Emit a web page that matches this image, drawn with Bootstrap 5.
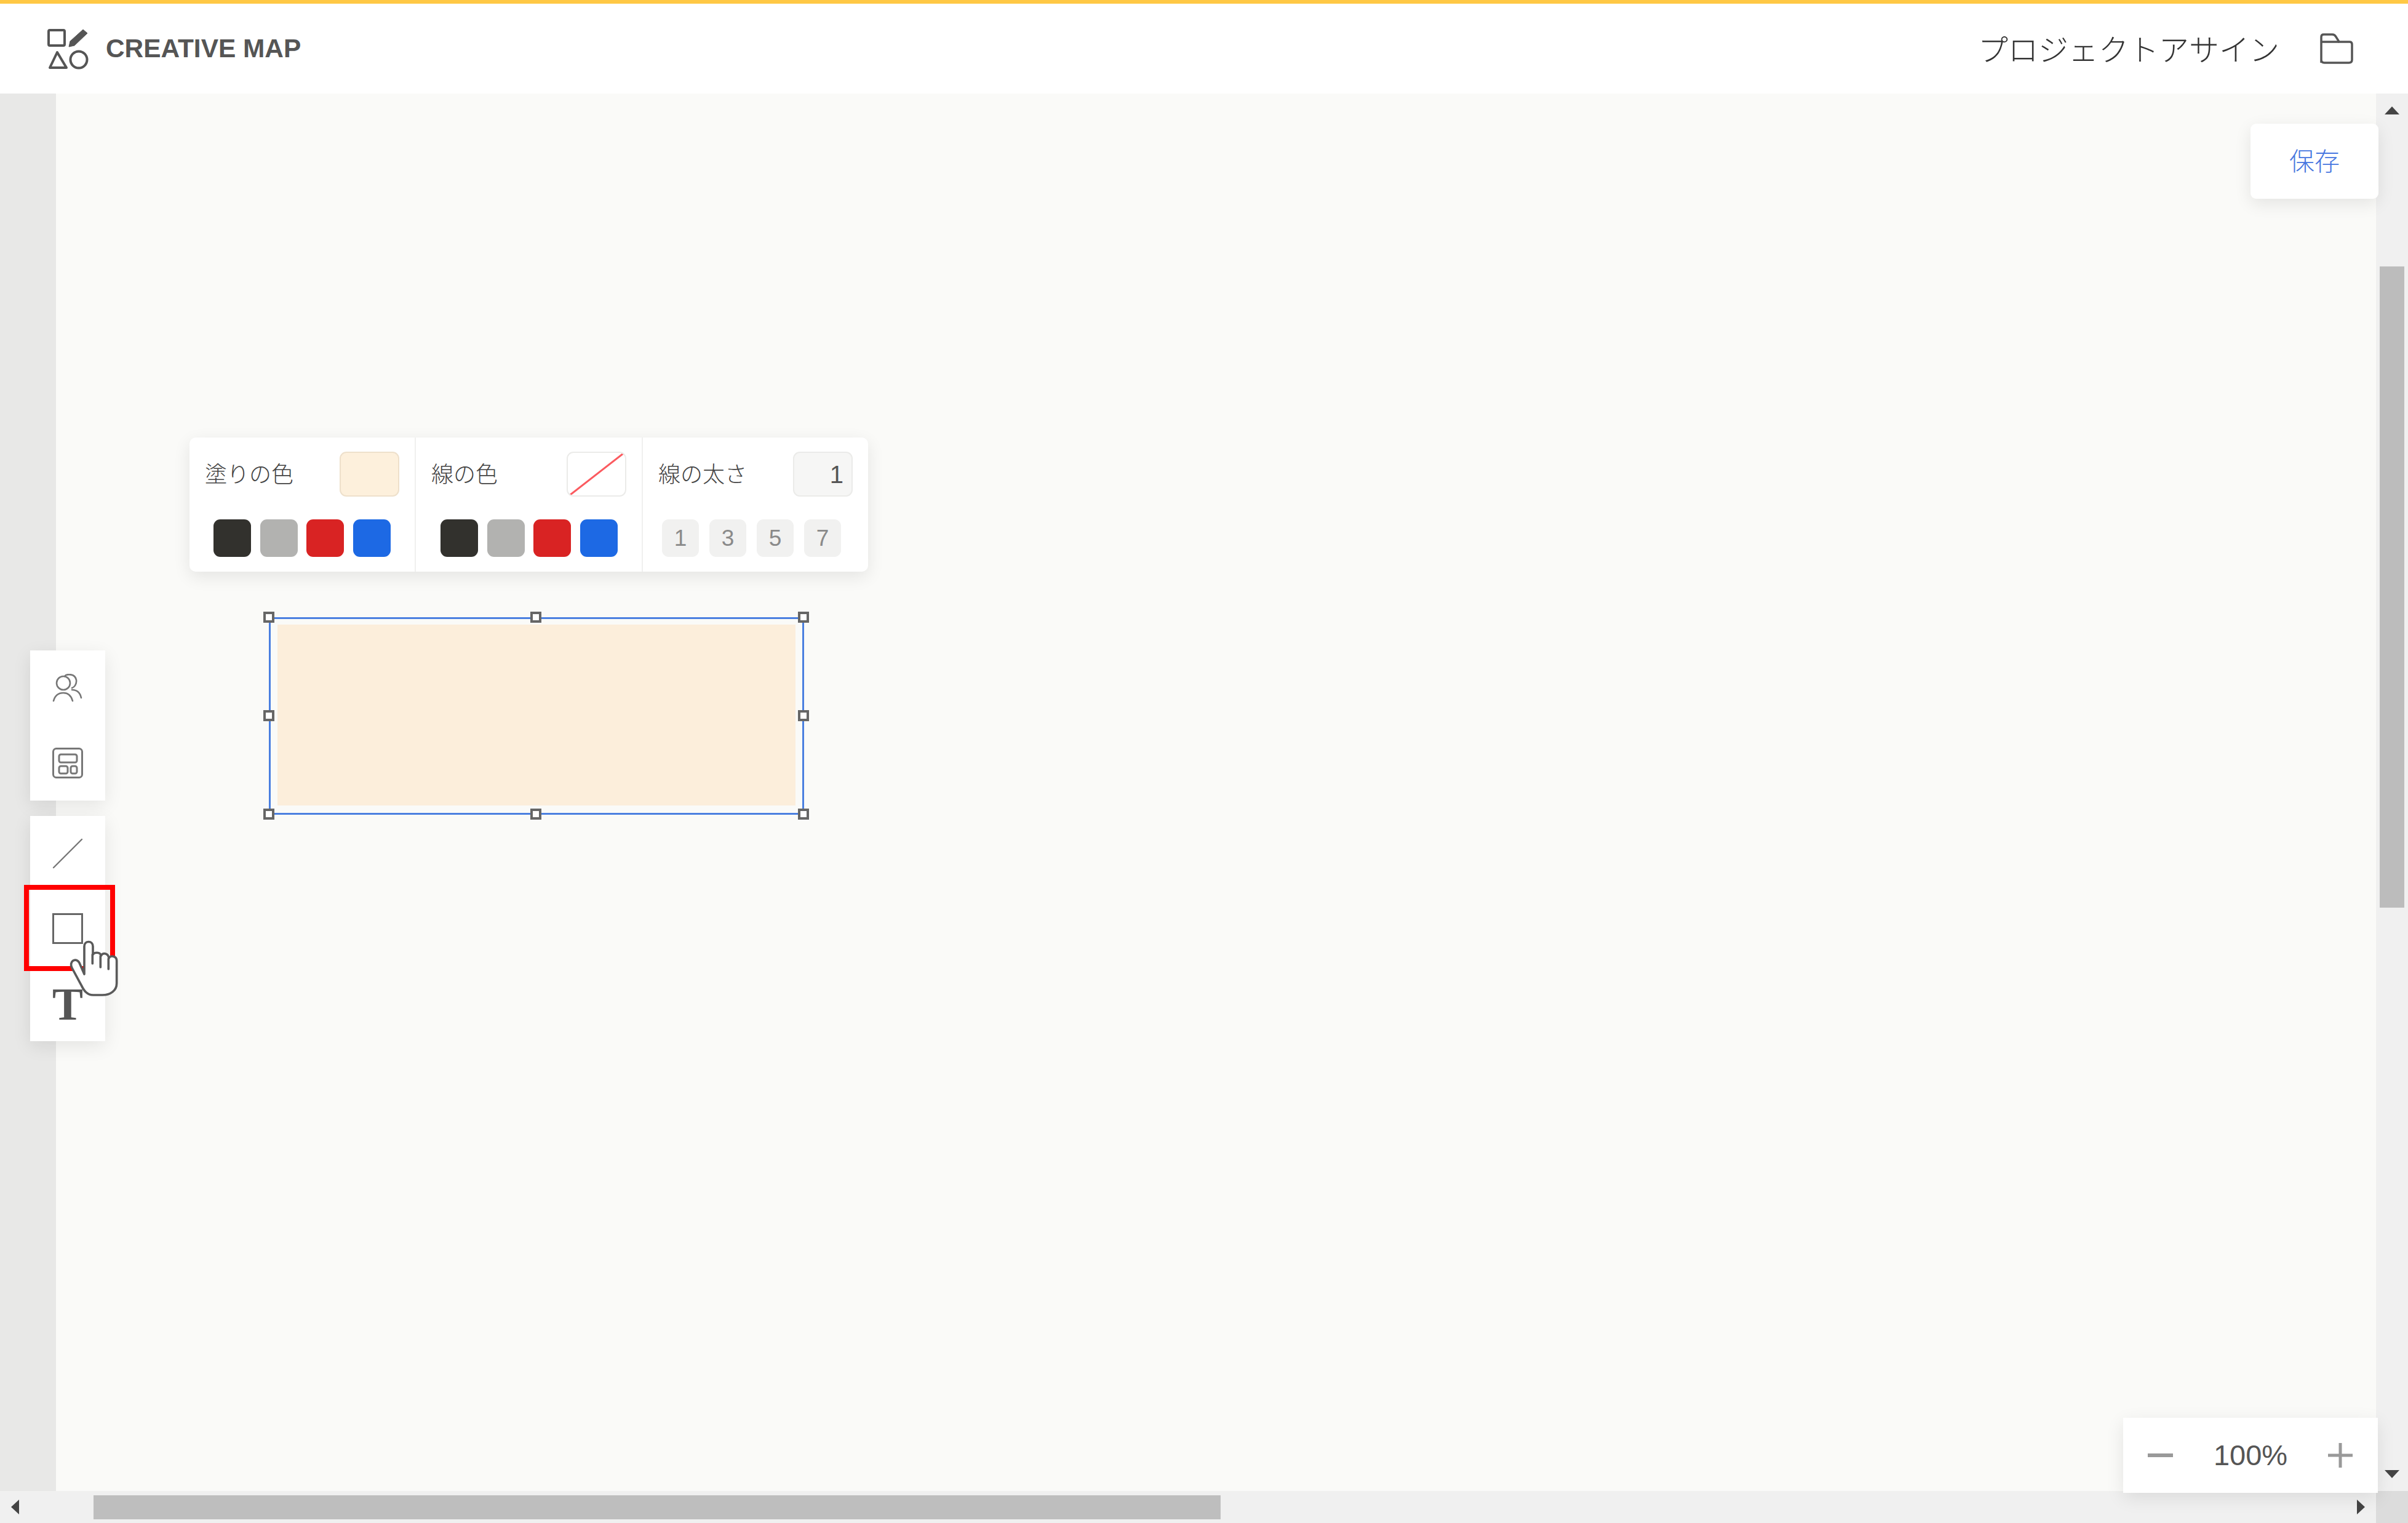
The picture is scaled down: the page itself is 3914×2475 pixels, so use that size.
<!DOCTYPE html>
<html lang="ja">
<head>
  <meta charset="UTF-8">
  <meta name="viewport" content="width=device-width, initial-scale=1.0">
  <title>Creative Map</title>
  <link rel="stylesheet" href="https://cdn.jsdelivr.net/npm/bootstrap@5.3.0/dist/css/bootstrap.min.css">
  <style>
    html, body { margin: 0; height: 2475px; overflow: hidden; }
    body { font-family: "Liberation Sans", "Noto Sans CJK JP", sans-serif; color: #555; background: #fff; }
    .jp { font-family: "Noto Sans CJK JP", "Liberation Sans", sans-serif; font-weight: 300; }
    .page { position: relative; width: 3914px; height: 2475px; }

    .top-line { height: 6px; background: #ffc845; }
    .top-head { height: 146px; background: #fff; padding: 0 89px 0 77px; }
    .brand { font-size: 42.4px; font-weight: 700; color: #555; margin-left: 28px; line-height: 1; }
    .assign { font-size: 49px; color: #333; line-height: 1; margin-right: 66px; padding-bottom: 4px; }

    .work { height: 2271px; }
    .gutter { width: 91px; background: #e8e8e7; }
    .paper { background: #fafaf8; }
    .vbar { width: 52px; background: #f0f0f0; padding-top: 21px; padding-bottom: 21px; }
    .vthumb { width: 40px; height: 1042px; margin-top: 247px; background: #bcbcbc; }
    .hbar { height: 52px; background: #f0f0f0; }
    .hthumb { width: 1832px; height: 39px; margin-left: 121px; background: #bebebe; }
    .corner { width: 52px; height: 52px; background: #dcdcdc; }
    .arr-up { border-left: 12px solid transparent; border-right: 12px solid transparent; border-bottom: 13px solid #444; }
    .arr-down { border-left: 12px solid transparent; border-right: 12px solid transparent; border-top: 13px solid #444; }
    .arr-left { margin-left: 18px; border-top: 12px solid transparent; border-bottom: 12px solid transparent; border-right: 13px solid #444; }
    .arr-right { margin-right: 18px; border-top: 12px solid transparent; border-bottom: 12px solid transparent; border-left: 13px solid #444; }

    .float-box { position: absolute; background: #fff; box-shadow: 0 8px 28px rgba(0, 0, 0, .09); }
    .save-box { left: 3658px; top: 201px; width: 208px; height: 122px; border-radius: 9px; color: #4676e0; font-size: 41px; padding-bottom: 4px; }

    .style-panel { left: 308px; top: 711px; width: 1103px; height: 218px; border-radius: 10px; }
    .style-sec { height: 218px; padding-top: 23px; border-right: 2px solid #f0f0ef; }
    .style-sec:last-child { border-right: 0; }
    .sec-fill { width: 368px; }
    .sec-line { width: 369px; }
    .sec-thick { width: 366px; }
    .sec-head { height: 73px; padding-left: 25px; padding-right: 25px; margin-bottom: 37px; }
    .sec-label { font-size: 36px; color: #444; line-height: 1; padding-bottom: 6px; }
    .cur-swatch { width: 97px; height: 73px; border-radius: 11px; border: 2px solid #ebebe9; }
    .cur-fill { background: #fdf0dc; border-color: #eee0cb; }
    .cur-none { background: #fff; }
    .cur-num { background: #f6f6f5; color: #555; font-size: 40px; padding-right: 13px; line-height: 1; }
    .chips { padding-left: 39px; gap: 14.5px; }
    .sec-line .chips { padding-left: 40px; }
    .chips-num { padding-left: 31px; gap: 17px; }
    .chip { width: 61px; height: 61px; border-radius: 11px; }
    .chip-dark { background: #32312d; }
    .chip-gray { background: #b2b2b0; }
    .chip-red { background: #d92323; }
    .chip-blue { background: #1d69e4; }
    .chip-num { width: 60px; background: #f1f1f0; color: #8a8a8a; font-size: 37px; line-height: 1; }

    .shape-box { position: absolute; left: 437px; top: 1003px; width: 870px; height: 321px; border: 3px solid #4a7fe0; padding: 9px 11px 12px 11px; }
    .shape-fill { background: #fceedb; height: 100%; }
    .grip { position: absolute; width: 18px; height: 18px; background: #fff; border: 4px solid #666; }

    .tool-box { left: 49px; width: 122px; }
    .tool-btn { height: 122px; }
    .t-glyph { font-family: "Liberation Serif", serif; font-weight: 700; font-size: 75px; line-height: 1; color: #555; }
    .picked { position: absolute; left: 39px; top: 1438px; width: 148px; height: 140px; border: 8px solid #f00; }
    .hand { position: absolute; left: 113px; top: 1528px; }

    .zoom-box { left: 3451px; top: 2304px; width: 414px; height: 122px; padding: 0 41px 0 40px; font-size: 47px; color: #555; }
  </style>
</head>
<body>
  <div class="page">
    <div class="top-line"></div>
    <header class="top-head d-flex align-items-center">
      <svg width="67" height="67" viewBox="0 0 67 67" fill="none" stroke="#555" stroke-width="4">
        <rect x="2" y="3" width="26" height="25" rx="2"></rect>
        <path d="M35 30 L37 21 L58 2 L65 8 L44 28 Z" fill="#555" stroke-width="1"></path>
        <path d="M16 39 L4 64 H31 Z" stroke-linejoin="round"></path>
        <circle cx="51" cy="51" r="13.5"></circle>
      </svg>
      <div class="brand">CREATIVE MAP</div>
      <div class="assign jp ms-auto">プロジェクトアサイン</div>
      <svg width="54" height="50" viewBox="0 0 54 50" fill="none" stroke="#555" stroke-width="3.5">
        <path d="M2 48 V6 Q2 2 6 2 H20 Q24 2 26 6 L31 14 H48 Q52 14 52 18 V43 Q52 48 47 48 H7 Q2 48 2 43"></path>
        <path d="M2 14 H31"></path>
      </svg>
    </header>

    <div class="work d-flex">
      <div class="gutter flex-shrink-0"></div>
      <div class="paper flex-grow-1"></div>
      <div class="vbar flex-shrink-0 d-flex flex-column align-items-center">
        <div class="arr-up"></div>
        <div class="vthumb"></div>
        <div class="arr-down mt-auto"></div>
      </div>
    </div>
    <div class="hbar d-flex align-items-center">
      <div class="arr-left"></div>
      <div class="hthumb"></div>
      <div class="arr-right ms-auto"></div>
      <div class="corner"></div>
    </div>

    <div class="float-box save-box jp d-flex align-items-center justify-content-center">保存</div>

    <div class="float-box style-panel d-flex">
      <div class="style-sec sec-fill">
        <div class="sec-head d-flex align-items-center justify-content-between">
          <span class="sec-label jp">塗りの色</span>
          <div class="cur-swatch cur-fill"></div>
        </div>
        <div class="chips d-flex">
          <div class="chip chip-dark"></div><div class="chip chip-gray"></div><div class="chip chip-red"></div><div class="chip chip-blue"></div>
        </div>
      </div>
      <div class="style-sec sec-line">
        <div class="sec-head d-flex align-items-center justify-content-between">
          <span class="sec-label jp">線の色</span>
          <div class="cur-swatch cur-none overflow-hidden">
            <svg class="d-block" width="93" height="69" viewBox="0 0 93 69"><path d="M4 68 L90 1" stroke="#fb5a5f" stroke-width="3"></path></svg>
          </div>
        </div>
        <div class="chips d-flex">
          <div class="chip chip-dark"></div><div class="chip chip-gray"></div><div class="chip chip-red"></div><div class="chip chip-blue"></div>
        </div>
      </div>
      <div class="style-sec sec-thick">
        <div class="sec-head d-flex align-items-center justify-content-between">
          <span class="sec-label jp">線の太さ</span>
          <div class="cur-swatch cur-num d-flex align-items-center justify-content-end">1</div>
        </div>
        <div class="chips-num d-flex">
          <div class="chip chip-num d-flex align-items-center justify-content-center">1</div>
          <div class="chip chip-num d-flex align-items-center justify-content-center">3</div>
          <div class="chip chip-num d-flex align-items-center justify-content-center">5</div>
          <div class="chip chip-num d-flex align-items-center justify-content-center">7</div>
        </div>
      </div>
    </div>

    <div class="shape-box"><div class="shape-fill"></div></div>
    <div class="grip" style="left:428px;top:994px"></div>
    <div class="grip" style="left:862px;top:994px"></div>
    <div class="grip" style="left:1297px;top:994px"></div>
    <div class="grip" style="left:428px;top:1154px"></div>
    <div class="grip" style="left:1297px;top:1154px"></div>
    <div class="grip" style="left:428px;top:1314px"></div>
    <div class="grip" style="left:862px;top:1314px"></div>
    <div class="grip" style="left:1297px;top:1314px"></div>

    <div class="float-box tool-box" style="top:1057px">
      <div class="tool-btn d-flex align-items-center justify-content-center">
        <svg width="50" height="46" viewBox="0 0 50 46" fill="none" stroke="#777" stroke-width="2.6" stroke-linecap="round">
          <circle cx="18" cy="15" r="11"></circle>
          <path d="M2 44 C5 33 13 31 18 31 C24 31 30 33 33 44"></path>
          <path d="M20 4 C23 0 37 -1 39 10 C40 18 35 22 32 23"></path>
          <path d="M32 26 C39 26 45 30 47 39"></path>
        </svg>
      </div>
      <div class="tool-btn d-flex align-items-center justify-content-center">
        <svg width="50" height="50" viewBox="0 0 50 50" fill="none" stroke="#777" stroke-width="3">
          <rect x="1.5" y="1.5" width="47" height="47" rx="5"></rect>
          <rect x="11" y="11" width="29" height="13" rx="3"></rect>
          <rect x="11" y="30" width="14" height="12" rx="3"></rect>
          <rect x="30" y="30" width="10" height="12" rx="3"></rect>
        </svg>
      </div>
    </div>

    <div class="float-box tool-box" style="top:1326px">
      <div class="tool-btn d-flex align-items-center justify-content-center">
        <svg width="50" height="50" viewBox="0 0 50 50" fill="none" stroke="#777" stroke-width="2.4" stroke-linecap="round"><path d="M2 48 L48 2"></path></svg>
      </div>
      <div class="tool-btn d-flex align-items-center justify-content-center">
        <svg width="50" height="50" viewBox="0 0 50 50" fill="none" stroke="#666" stroke-width="3"><rect x="1.5" y="1.5" width="47" height="47"></rect></svg>
      </div>
      <div class="tool-btn d-flex align-items-center justify-content-center">
        <span class="t-glyph">T</span>
      </div>
    </div>

    <div class="picked"></div>
    <svg class="hand" width="80" height="92" viewBox="280 625 240 276" fill="#fff" stroke="#5a5a5a" stroke-width="11" stroke-linejoin="round" stroke-linecap="round">
      <path d="M352 790 V655 C352 625 394 625 394 655 V695 C400 682 430 682 434 700 C440 684 468 686 472 712 C478 698 510 700 510 725 V835 C510 870 480 892 440 892 H395 C365 892 350 870 338 845 L292 760 C275 730 310 705 328 735 Z"></path>
      <path d="M392 695 V738 M431 702 V756 M470 715 V765" fill="none"></path>
    </svg>

    <div class="float-box zoom-box d-flex align-items-center justify-content-between">
      <svg width="41" height="8" viewBox="0 0 41 8"><path d="M0 4 H41" stroke="#999" stroke-width="6"></path></svg>
      <span>100%</span>
      <svg width="40" height="40" viewBox="0 0 40 40"><path d="M0 20 H40 M20 0 V40" stroke="#999" stroke-width="5"></path></svg>
    </div>
  </div>
  <script src="https://cdn.jsdelivr.net/npm/bootstrap@5.3.0/dist/js/bootstrap.bundle.min.js"></script>
</body>
</html>
